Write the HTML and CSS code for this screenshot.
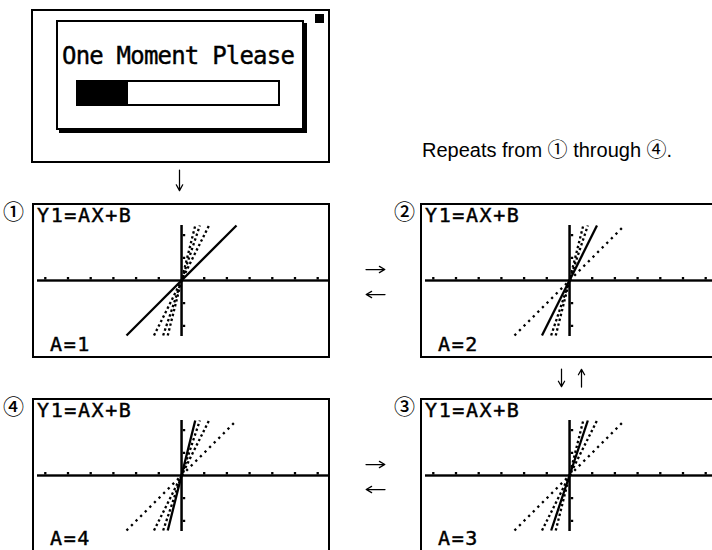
FILE: index.html
```html
<!DOCTYPE html>
<html lang="en">
<head>
<meta charset="utf-8">
<title>Dynamic Graph</title>
<link rel="stylesheet" href="styles.css">
</head>
<body>
<svg class="defs" width="0" height="0" aria-hidden="true">
  <defs>
    <g id="axes">
      <rect x="3" y="74.3" width="291" height="2.4"/>
      <rect x="146.3" y="20" width="2.5" height="111"/>
      <path d="M10.15 72h2.3v2.4h-2.3z M32.85 72h2.3v2.4h-2.3z M55.55 72h2.3v2.4h-2.3z M78.25 72h2.3v2.4h-2.3z M100.95 72h2.3v2.4h-2.3z M123.65 72h2.3v2.4h-2.3z M169.05 72h2.3v2.4h-2.3z M191.75 72h2.3v2.4h-2.3z M214.45 72h2.3v2.4h-2.3z M237.15 72h2.3v2.4h-2.3z M259.85 72h2.3v2.4h-2.3z M282.55 72h2.3v2.4h-2.3z"/>
      <path d="M148.8 28.95h2.4v2.3h-2.4z M148.8 51.65h2.4v2.3h-2.4z M148.8 97.05h2.4v2.3h-2.4z M148.8 119.75h2.4v2.3h-2.4z"/>
    </g>
    <line id="m1" x1="92.5" y1="130.5" x2="202.5" y2="20.5"/>
    <line id="m2" x1="120" y1="130.5" x2="175" y2="20.5"/>
    <line id="m3" x1="129.17" y1="130.5" x2="165.83" y2="20.5"/>
    <line id="m4" x1="133.75" y1="130.5" x2="161.25" y2="20.5"/>
    <path id="arr-r" d="M0 4.5H18.6 M13.4 1.4L18.8 4.5L13.4 7.6"/>
    <path id="arr-l" d="M19 4.5H0.4 M5.6 1.4L0.2 4.5L5.6 7.6"/>
  </defs>
</svg>

<div class="top">
  <div class="lcd-box loading">
    <div class="dialog">
      <div class="msg">One Moment Please</div>
      <div class="progress"><div class="progress-fill" style="width:50px"></div></div>
    </div>
    <span class="busy"></span>
  </div>
  <p class="note">Repeats from <span class="circ">①</span> through <span class="circ">④</span>.</p>
</div>

<div class="down">
  <svg class="arrow-v" width="9" height="21" viewBox="0 0 9 21"><path d="M4.5 0V20.4 M1.3 14.8L4.5 20.6L7.7 14.8"/></svg>
</div>

<div class="screens">
  <div class="num num-left r1">①</div>
  <svg class="screen c-left r1" width="298" height="155" viewBox="0 0 298 155">
    <rect class="frame" x="1" y="1" width="296" height="153"/>
    <g transform="translate(2 2)">
      <use href="#m2" class="dot"/>
      <use href="#m3" class="dot"/>
      <use href="#m4" class="dot"/>
      <use href="#m1" class="solid"/>
      <use href="#axes"/>
    </g>
    <text class="lcd" x="5" y="19">Y1=AX+B</text>
    <text class="lcd" x="18" y="148">A=1</text>
  </svg>
  <div class="swap r1">
    <svg class="arrow-h" width="19" height="9" viewBox="0 0 19 9"><use href="#arr-r"/></svg>
    <svg class="arrow-h" width="19" height="9" viewBox="0 0 19 9"><use href="#arr-l"/></svg>
  </div>
  <div class="num num-right r1">②</div>
  <svg class="screen c-right r1" width="298" height="155" viewBox="0 0 298 155">
    <rect class="frame" x="1" y="1" width="296" height="153"/>
    <g transform="translate(2 2)">
      <use href="#m1" class="dot dot1"/>
      <use href="#m3" class="dot"/>
      <use href="#m4" class="dot"/>
      <use href="#m2" class="solid"/>
      <use href="#axes"/>
    </g>
    <text class="lcd" x="5" y="19">Y1=AX+B</text>
    <text class="lcd" x="18" y="148">A=2</text>
  </svg>

  <div class="updown">
    <svg class="arrow-v" width="9" height="18" viewBox="0 0 9 18"><path d="M4.5 0V17.4 M1.4 12.2L4.5 17.6L7.6 12.2"/></svg>
    <svg class="arrow-v" width="9" height="18" viewBox="0 0 9 18"><path d="M4.5 18V0.6 M1.4 5.8L4.5 0.4L7.6 5.8"/></svg>
  </div>

  <div class="num num-left r3">④</div>
  <svg class="screen c-left r3" width="298" height="155" viewBox="0 0 298 155">
    <rect class="frame" x="1" y="1" width="296" height="153"/>
    <g transform="translate(2 2)">
      <use href="#m1" class="dot dot1"/>
      <use href="#m2" class="dot"/>
      <use href="#m3" class="dot"/>
      <use href="#m4" class="solid"/>
      <use href="#axes"/>
    </g>
    <text class="lcd" x="5" y="19">Y1=AX+B</text>
    <text class="lcd" x="18" y="147">A=4</text>
  </svg>
  <div class="swap r3">
    <svg class="arrow-h" width="19" height="9" viewBox="0 0 19 9"><use href="#arr-r"/></svg>
    <svg class="arrow-h" width="19" height="9" viewBox="0 0 19 9"><use href="#arr-l"/></svg>
  </div>
  <div class="num num-right r3">③</div>
  <svg class="screen c-right r3" width="298" height="155" viewBox="0 0 298 155">
    <rect class="frame" x="1" y="1" width="296" height="153"/>
    <g transform="translate(2 2)">
      <use href="#m1" class="dot dot1"/>
      <use href="#m2" class="dot"/>
      <use href="#m4" class="dot"/>
      <use href="#m3" class="solid"/>
      <use href="#axes"/>
    </g>
    <text class="lcd" x="5" y="19">Y1=AX+B</text>
    <text class="lcd" x="18" y="147">A=3</text>
  </svg>
</div>
</body>
</html>
```

FILE: styles.css
```css
html, body {
  margin: 0;
  padding: 0;
  background: #fff;
  overflow: hidden;
}

body {
  width: 712px;
  height: 550px;
  font-family: "Liberation Sans", Arial, sans-serif;
  color: #000;
}

.defs {
  display: block;
  width: 0;
  height: 0;
  overflow: hidden;
}

/* ---------- top: loading screen ---------- */
.top {
  display: flex;
  align-items: flex-end;
  padding: 9px 0 0 31px;
}

.lcd-box {
  box-sizing: border-box;
  border: 2px solid #000;
  background: #fff;
}

.loading {
  position: relative;
  flex: none;
  width: 299px;
  height: 154px;
  padding: 9px 0 0 23px;
}

.dialog {
  box-sizing: border-box;
  width: 248px;
  height: 110px;
  border: 2px solid #000;
  box-shadow: 3px 3px 0 #000;
  padding: 22px 0 0 4px;
}

.msg {
  font-family: "DejaVu Sans Mono", monospace;
  font-size: 24px;
  line-height: 24px;
  letter-spacing: -0.8px;
  white-space: nowrap;
  -webkit-text-stroke: 0.4px #000;
}

.progress {
  box-sizing: border-box;
  width: 204px;
  height: 26px;
  margin: 12px 0 0 14px;
  border: 2px solid #000;
}

.progress-fill {
  height: 100%;
  background: #000;
}

.busy {
  position: absolute;
  top: 3px;
  right: 4px;
  width: 9px;
  height: 9px;
  background: #000;
}

.note {
  margin: 0 0 3px 92px;
  font-size: 20px;
  line-height: 20px;
  white-space: nowrap;
}

.circ {
  font-family: "Noto Sans CJK JP", sans-serif;
  line-height: 0;
}

/* ---------- arrows ---------- */
.arrow-h,
.arrow-v {
  display: block;
  fill: none;
  stroke: #000;
  stroke-width: 1.25;
  stroke-linecap: round;
  stroke-linejoin: round;
  overflow: visible;
}

.down {
  box-sizing: border-box;
  width: 299px;
  height: 40px;
  margin-left: 31px;
  padding: 7px 3px 0 0;
  display: flex;
  justify-content: center;
  align-items: flex-start;
}

/* ---------- graph screens ---------- */
.screens {
  display: grid;
  grid-template-columns: 32px 298px 60px 30px 298px;
  grid-template-rows: 155px 40px 155px;
}

.r1 { grid-row: 1; }
.r3 { grid-row: 3; }
.c-left { grid-column: 2; }
.c-right { grid-column: 5; }

.num {
  align-self: start;
  margin-top: -3px;
  font-family: "Noto Sans CJK JP", sans-serif;
  font-size: 21px;
  font-weight: 500;
  line-height: 21px;
}

.num-left {
  grid-column: 1;
  justify-self: start;
  margin-left: 3px;
}

.num-right {
  grid-column: 4;
  justify-self: end;
  margin-right: 5px;
}

.screen {
  display: block;
  background: #fff;
}

.frame {
  fill: none;
  stroke: #000;
  stroke-width: 2;
}

.swap {
  grid-column: 3 / 5;
  display: flex;
  flex-direction: column;
  justify-content: center;
  align-items: center;
  gap: 16.5px;
  padding-top: 3px;
}

.updown {
  grid-row: 2;
  grid-column: 5;
  display: flex;
  justify-content: center;
  align-items: center;
  gap: 11px;
  padding-left: 4px;
}

.lcd {
  font-family: "DejaVu Sans Mono", monospace;
  font-size: 20px;
  letter-spacing: 1.6px;
  fill: #000;
  stroke: #000;
  stroke-width: 0.45;
}

.solid {
  stroke: #000;
  stroke-width: 2.3;
}

.dot {
  stroke: #000;
  stroke-width: 2.3;
  stroke-dasharray: 2.4 2.6;
}

.dot1 {
  stroke-dasharray: 2.3 4.2;
}
```
